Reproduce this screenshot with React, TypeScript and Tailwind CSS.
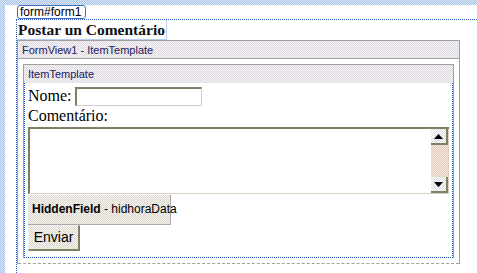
import React from "react";

const sans = { fontFamily: '"Liberation Sans", Arial, sans-serif' };
const serif = { fontFamily: '"Liberation Serif", "Times New Roman", serif' };

export default function App() {
  return (
    <div className="w-[477px] h-[273px] bg-white overflow-hidden flex flex-col">
      <div className="h-[5px] shrink-0 bg-[repeating-conic-gradient(#a8c4ec_0%_25%,#dce8f8_0%_50%)] bg-[length:2px_2px]" />
      <div className="flex flex-1 min-h-0">
        <div className="w-[5px] shrink-0 bg-[repeating-conic-gradient(#a8c4ec_0%_25%,#dce8f8_0%_50%)] bg-[length:2px_2px]" />
        <div className="flex-1 pl-[11px] flex flex-col min-w-0">
          <div className="h-[14px] flex items-end pl-[1px]">
            <div
              className="h-[14px] w-[69px] border border-[#3c6ed0] rounded-[3px] text-[12px] leading-[12px] text-black pl-[2px] whitespace-nowrap"
              style={sans}
            >
              form#form1
            </div>
          </div>
          <div className="flex-1 border-l border-t border-dotted border-[#2a5cc0] flex flex-col">
            <div className="flex">
              <div
                className="h-[20px] w-[150px] border border-t-0 border-l-0 border-[#b8cdf0] text-[15.5px] leading-[20px] font-bold text-[#111] pl-[1px] whitespace-nowrap"
                style={serif}
              >
                Postar un Comentário
              </div>
            </div>
            <div className="w-[443px] h-[224px] border border-[#a0a0a0] border-b-0 flex flex-col">
              <div
                className="h-[18px] shrink-0 border-b border-[#a0a0a0] bg-[repeating-conic-gradient(#dcd6de_0%_25%,#f8f6f8_0%_50%)] bg-[length:2px_2px] text-[11px] leading-[18px] text-[#202060] pl-[4px]"
                style={sans}
              >
                FormView1 - ItemTemplate
              </div>
              <div className="flex-1 px-[5px] pt-[5px] pb-[5px] flex flex-col">
                <div className="flex-1 border border-[#a0a0a0] border-b-0 flex flex-col">
                  <div
                    className="h-[18px] shrink-0 bg-[repeating-conic-gradient(#dcd6de_0%_25%,#f8f6f8_0%_50%)] bg-[length:2px_2px] text-[11px] leading-[18px] text-[#202060] pl-[4px]"
                    style={sans}
                  >
                    ItemTemplate
                  </div>
                  <div className="flex-1 border-l border-r border-b border-dotted border-[#1f50b0] pl-[3px] pt-[3px] flex flex-col items-start">
                    <div className="flex items-center h-[20px]">
                      <span className="text-[16px] leading-[18px] text-black mr-[3px]" style={serif}>
                        Nome:
                      </span>
                      <div className="w-[127px] h-[19px] border-solid border-t-2 border-l-2 border-r border-b border-t-[#808068] border-l-[#808068] border-r-[#d8c8c8] border-b-[#d8c8c8] bg-white" />
                    </div>
                    <div className="h-[20px] text-[16px] leading-[20px] text-black" style={serif}>
                      Comentário:
                    </div>
                    <div className="mt-[1px] w-[421px] h-[67px] border-solid border-t-2 border-l-2 border-b border-r-0 border-t-[#808068] border-l-[#808068] border-b-[#d8d0c0] bg-white flex justify-end">
                      <div className="w-[18px] h-full flex flex-col bg-[repeating-conic-gradient(#e8c8cc_0%_25%,#f0ecd0_0%_50%)] bg-[length:2px_2px] border-r border-[#d8d0c0]">
                        <div className="h-[16px] w-[17px] bg-[repeating-conic-gradient(#dcdcdc_0%_25%,#ffffff_0%_50%)] bg-[length:2px_2px] border-r-2 border-b-2 border-[#808068] flex items-center justify-center">
                          <svg width="9" height="5" viewBox="0 0 9 5"><path d="M4.5 0L9 5H0Z" fill="#000" /></svg>
                        </div>
                        <div className="flex-1" />
                        <div className="h-[16px] w-[17px] bg-[repeating-conic-gradient(#dcdcdc_0%_25%,#ffffff_0%_50%)] bg-[length:2px_2px] border-r-2 border-b-2 border-[#808068] flex items-center justify-center">
                          <svg width="9" height="5" viewBox="0 0 9 5"><path d="M0 0H9L4.5 5Z" fill="#000" /></svg>
                        </div>
                      </div>
                    </div>
                    <div
                      className="mt-[1px] h-[30px] w-[143px] border-r border-b border-[#a8a8a8] bg-[repeating-conic-gradient(#dcd8d0_0%_25%,#f6f4ee_0%_50%)] bg-[length:2px_2px] text-[12px] leading-[28px] text-black pl-[4px] whitespace-nowrap"
                      style={sans}
                    >
                      <span className="font-bold">HiddenField</span> - hidhoraData
                    </div>
                    <div
                      className="h-[26px] w-[52px] border-solid border-t border-l border-r-2 border-b-2 border-t-[#f0f0f0] border-l-[#f0f0f0] border-r-[#808068] border-b-[#808068] bg-[repeating-conic-gradient(#dcd8d0_0%_25%,#f6f4ee_0%_50%)] bg-[length:2px_2px] text-[14px] leading-[23px] text-black text-center"
                      style={sans}
                    >
                      Enviar
                    </div>
                  </div>
                </div>
              </div>
              <div className="h-0 border-b border-dashed border-[#a0a0a0]" />
            </div>
          </div>
        </div>
      </div>
    </div>
  );
}
